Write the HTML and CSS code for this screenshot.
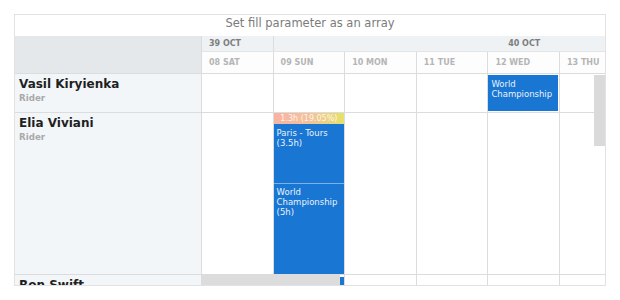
FILE: index.html
```html
<!DOCTYPE html>
<html lang="en">
<head>
    <meta charset="UTF-8">
    <title>Gantt - fill array</title>
    <link rel="stylesheet" href="styles.css">
</head>
<body>

<div class="chart">
    <div class="chart-title">Set fill parameter as an array</div>
    <div class="chart-body">
        <div class="side">
            <div class="side-head"></div>
            <div class="side-row row-short">
                <div class="name">Vasil Kiryienka</div>
                <div class="role">Rider</div>
            </div>
            <div class="side-row row-tall">
                <div class="name">Elia Viviani</div>
                <div class="role">Rider</div>
            </div>
            <div class="side-row">
                <div class="name">Ron Swift</div>
                <div class="role">Rider</div>
            </div>
        </div>

        <div class="timeline">
            <div class="weeks">
                <div class="week week-first">39 OCT</div>
                <div class="week week-wide">40 OCT</div>
            </div>
            <div class="days">
                <div class="day">08 SAT</div>
                <div class="day">09 SUN</div>
                <div class="day">10 MON</div>
                <div class="day">11 TUE</div>
                <div class="day">12 WED</div>
                <div class="day">13 THU</div>
            </div>

            <div class="lane row-short">
                <div class="cell"></div>
                <div class="cell"></div>
                <div class="cell"></div>
                <div class="cell"></div>
                <div class="cell">
                    <div class="task task-short">World Championship</div>
                </div>
                <div class="cell"></div>
            </div>

            <div class="lane row-tall">
                <div class="cell"></div>
                <div class="cell stack">
                    <div class="progress">1.3h (19.05%)</div>
                    <div class="task task-paris">Paris - Tours<br>(3.5h)</div>
                    <div class="task task-world">World<br>Championship<br>(5h)</div>
                </div>
                <div class="cell"></div>
                <div class="cell"></div>
                <div class="cell"></div>
                <div class="cell"></div>
            </div>

            <div class="lane">
                <div class="cell"></div>
                <div class="cell stack">
                    <div class="task task-fill"></div>
                </div>
                <div class="cell"></div>
                <div class="cell"></div>
                <div class="cell"></div>
                <div class="cell"></div>
            </div>

            <div class="scroll-v"></div>
            <div class="scroll-h"></div>
        </div>
    </div>
</div>

</body>
</html>
```

FILE: styles.css
```css
body {
    margin: 0;
    padding: 14px;
    background-color: #fff;
    font-family: "DejaVu Sans", Verdana, sans-serif;
}
.chart {
    width: 592px;
    height: 272px;
    box-sizing: border-box;
    border: 1px solid #e2e2e2;
    overflow: hidden;
    display: flex;
    flex-direction: column;
}
.chart-title {
    height: 21px;
    flex-shrink: 0;
    line-height: 16px;
    text-align: center;
    font-size: 11.5px;
    color: #7b7b7b;
}
.chart-body {
    display: flex;
    flex: 1;
    min-height: 0;
}

/* left data grid */
.side {
    width: 187px;
    flex-shrink: 0;
    box-sizing: border-box;
    border-right: 1px solid #dcdcdc;
    background-color: #f3f6f9;
}
.side-head {
    height: 38px;
    box-sizing: border-box;
    border-bottom: 1px solid #dcdcdc;
    background-color: #e5e8eb;
}
.side-row {
    box-sizing: border-box;
    border-bottom: 1px solid #dcdcdc;
    padding: 3px 4px 0;
    height: 40px;
}
.row-short {
    height: 39px;
}
.row-tall {
    height: 162px;
}
.name {
    font-size: 12px;
    font-weight: bold;
    line-height: 14px;
    color: #1f1f1f;
}
.role {
    margin-top: 1px;
    font-size: 8.7px;
    font-weight: bold;
    line-height: 12px;
    color: #a9a9a9;
}

/* timeline */
.timeline {
    position: relative;
    flex: 1;
    overflow: hidden;
    background-color: #fff;
}
.weeks {
    display: flex;
    height: 16px;
    box-sizing: border-box;
    border-bottom: 1px solid #e4e4e4;
    background-color: #eef2f5;
}
.week {
    flex-shrink: 0;
    box-sizing: border-box;
    font-size: 8px;
    font-weight: bold;
    line-height: 15px;
    color: #7d7d7d;
}
.week-first {
    width: 71.6px;
    padding-left: 7px;
    border-right: 1px solid #dcdcdc;
}
.week-wide {
    width: 501.2px;
    text-align: center;
}
.days,
.lane {
    display: grid;
    grid-template-columns: repeat(6, 71.6px);
    box-sizing: border-box;
    border-bottom: 1px solid #dcdcdc;
}
.days {
    height: 22px;
    background-color: #fdfdfd;
}
.day {
    box-sizing: border-box;
    border-right: 1px solid #dcdcdc;
    padding-left: 7px;
    font-size: 8px;
    font-weight: bold;
    line-height: 21px;
    color: #b5b5b5;
}
.lane {
    height: 40px;
}
.lane.row-short {
    height: 39px;
}
.lane.row-tall {
    height: 162px;
}
.cell {
    box-sizing: border-box;
    border-right: 1px solid #dcdcdc;
    min-width: 0;
}
.stack {
    display: flex;
    flex-direction: column;
}
.task {
    box-sizing: border-box;
    background-color: #1976d2;
    color: #eaf2fb;
    font-size: 8.5px;
    line-height: 10px;
    padding: 4px 3px 0;
    overflow: hidden;
    white-space: nowrap;
}
.task-short {
    height: 36px;
    margin-top: 1px;
    white-space: normal;
    width: 70px;
}
.progress {
    height: 11px;
    flex-shrink: 0;
    background: linear-gradient(to right, #f8b3a2, #f4c29a 50%, #e4e26c);
    color: rgba(255, 255, 255, 0.85);
    font-size: 8px;
    line-height: 11px;
    text-align: center;
    white-space: nowrap;
}
.task-paris {
    height: 60px;
    flex-shrink: 0;
    border-bottom: 1px solid #7eb1e6;
}
.task-world {
    flex: 1;
    padding-top: 3px;
}
.task-fill {
    margin-top: 2px;
    flex: 1;
}

/* scrollbars */
.scroll-v {
    position: absolute;
    top: 39px;
    right: 0;
    width: 11px;
    height: 71px;
    background-color: #dadada;
}
.scroll-h {
    position: absolute;
    left: 0;
    bottom: 0;
    width: 138px;
    height: 11px;
    background-color: #dcdcdc;
}
```
